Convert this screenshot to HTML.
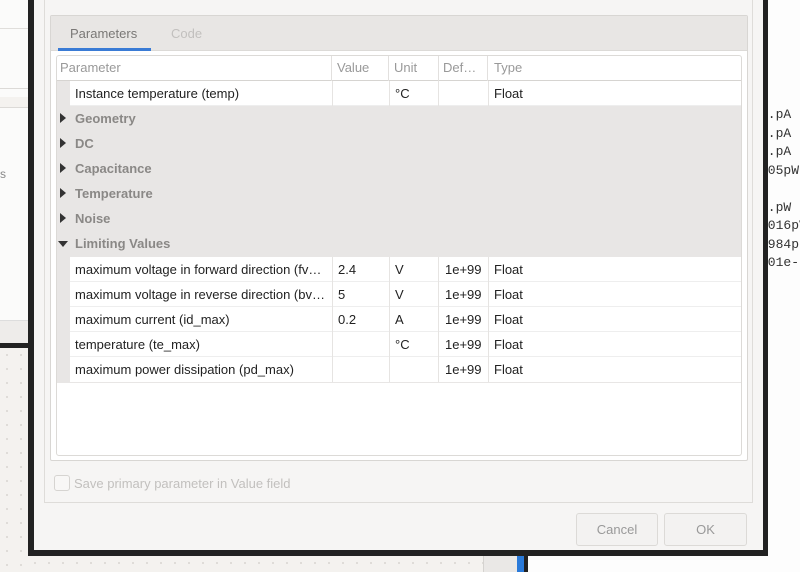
<!DOCTYPE html>
<html><head><meta charset="utf-8"><style>
*{margin:0;padding:0;box-sizing:border-box}
body{width:800px;height:572px;overflow:hidden;background:#f4f2ef;font-family:"Liberation Sans",sans-serif;font-size:13px;color:#222;position:relative}
.abs{position:absolute}
.dots{background-image:radial-gradient(#d8d5d0 1px,transparent 1px);background-size:14px 14px}
.mono{font-family:"Liberation Mono",monospace;font-size:13px;color:#333;line-height:18.5px}
.row{position:absolute;left:70px;width:671px;height:25px;line-height:25px;background:#fff;border-bottom:1px solid #eee}
.row span{position:absolute;top:0;white-space:nowrap;overflow:hidden}
.grp{position:absolute;left:75px;height:25px;line-height:25px;color:#8a8886;font-weight:bold;font-size:13px}
.tri{position:absolute;left:60px;width:0;height:0;border-top:5px solid transparent;border-bottom:5px solid transparent;border-left:6px solid #333}
.vl{position:absolute;top:0;width:1px;height:25px;background:#e6e4e2}
</style></head><body>
<div class="abs" style="left:0;top:0;width:28px;height:345px;background:#fbfbfa"></div>
<div class="abs" style="left:0;top:28px;width:28px;height:1px;background:#e0dedb"></div>
<div class="abs" style="left:0;top:88px;width:28px;height:1px;background:#dcdad7"></div>
<div class="abs" style="left:0;top:97px;width:28px;height:10px;background:#f4f2ef"></div>
<div class="abs" style="left:0;top:107px;width:28px;height:1px;background:#dcdad7"></div>
<div class="abs" style="left:0;top:167px;color:#888;font-size:12px">s</div>
<div class="abs" style="left:0;top:320px;width:28px;height:25px;background:#eeecea;border-top:1px solid #ddd"></div>
<div class="abs" style="left:0;top:343px;width:30px;height:5px;background:#222"></div>
<div class="abs dots" style="left:0;top:348px;width:28px;height:224px"></div>
<div class="abs dots" style="left:28px;top:556px;width:455px;height:16px"></div>
<div class="abs" style="left:483px;top:556px;width:34px;height:16px;background:#eae8e6;border-left:1px solid #d5d3d0"></div>
<div class="abs" style="left:517px;top:556px;width:7px;height:16px;background:#2a7ad9"></div>
<div class="abs" style="left:524px;top:556px;width:4px;height:16px;background:#222"></div>
<div class="abs" style="left:528px;top:556px;width:272px;height:16px;background:#fdfdfd"></div>
<div class="abs" style="left:768px;top:0;width:32px;height:572px;background:#fdfdfd"></div>
<div class="abs mono" style="left:760px;top:106px;white-space:pre"> .pA
 .pA
 .pA
 05pW

 .pW
 016pV
 984p
 01e-</div>
<div class="abs" style="left:28px;top:-10px;width:740px;height:566px;background:#222"></div>
<div class="abs" style="left:34px;top:-10px;width:729px;height:560px;background:#f6f5f4"></div>
<div class="abs" style="left:44px;top:-2px;width:709px;height:505px;border:1px solid #dedcd9;border-top:none"></div>
<div class="abs" style="left:50px;top:15px;width:698px;height:446px;border:1px solid #d8d6d3;background:#fff;border-radius:2px"></div>
<div class="abs" style="left:51px;top:16px;width:696px;height:35px;background:#e8e6e4;border-bottom:1px solid #dcdad7"></div>
<div class="abs" style="left:70px;top:26px;color:#7a7876">Parameters</div>
<div class="abs" style="left:171px;top:26px;color:#c2c0be">Code</div>
<div class="abs" style="left:58px;top:48px;width:93px;height:3px;background:#3a7bd5"></div>
<div class="abs" style="left:56px;top:55px;width:686px;height:401px;border:1px solid #dcdad7;border-radius:3px;background:#fff"></div>
<div class="abs" style="left:57px;top:56px;width:684px;height:25px;line-height:24px;color:#999;border-bottom:1px solid #d6d4d1">
<span class="abs" style="left:3px">Parameter</span>
<span class="abs" style="left:274px;top:0;width:1px;height:25px;background:#e2e0de"></span><span class="abs" style="left:280px">Value</span>
<span class="abs" style="left:331px;top:0;width:1px;height:25px;background:#e2e0de"></span><span class="abs" style="left:337px">Unit</span>
<span class="abs" style="left:381px;top:0;width:1px;height:25px;background:#e2e0de"></span><span class="abs" style="left:386px">Def…</span>
<span class="abs" style="left:430px;top:0;width:1px;height:25px;background:#e2e0de"></span><span class="abs" style="left:437px">Type</span>
</div>
<div class="abs" style="left:57px;top:81px;width:684px;height:302px;background:#e8e6e5"></div>
<div class="row" style="top:81px"><span style="left:5px">Instance temperature (temp)</span><i class="vl" style="left:262px"></i><i class="vl" style="left:319px"></i><span style="left:325px">°C</span><i class="vl" style="left:368px"></i><i class="vl" style="left:418px"></i><span style="left:424px">Float</span></div>
<i class="tri" style="top:113px"></i><div class="grp" style="top:106px">Geometry</div>
<i class="tri" style="top:138px"></i><div class="grp" style="top:131px">DC</div>
<i class="tri" style="top:163px"></i><div class="grp" style="top:156px">Capacitance</div>
<i class="tri" style="top:188px"></i><div class="grp" style="top:181px">Temperature</div>
<i class="tri" style="top:213px"></i><div class="grp" style="top:206px">Noise</div>
<i class="abs" style="left:58px;top:241px;width:0;height:0;border-left:5px solid transparent;border-right:5px solid transparent;border-top:6px solid #333"></i><div class="grp" style="top:231px">Limiting Values</div>
<div class="row" style="top:257px"><span style="left:5px;width:255px">maximum voltage in forward direction (fv…</span><i class="vl" style="left:262px"></i><span style="left:268px">2.4</span><i class="vl" style="left:319px"></i><span style="left:325px">V</span><i class="vl" style="left:368px"></i><span style="left:375px">1e+99</span><i class="vl" style="left:418px"></i><span style="left:424px">Float</span></div>
<div class="row" style="top:282px"><span style="left:5px;width:255px">maximum voltage in reverse direction (bv…</span><i class="vl" style="left:262px"></i><span style="left:268px">5</span><i class="vl" style="left:319px"></i><span style="left:325px">V</span><i class="vl" style="left:368px"></i><span style="left:375px">1e+99</span><i class="vl" style="left:418px"></i><span style="left:424px">Float</span></div>
<div class="row" style="top:307px"><span style="left:5px">maximum current (id_max)</span><i class="vl" style="left:262px"></i><span style="left:268px">0.2</span><i class="vl" style="left:319px"></i><span style="left:325px">A</span><i class="vl" style="left:368px"></i><span style="left:375px">1e+99</span><i class="vl" style="left:418px"></i><span style="left:424px">Float</span></div>
<div class="row" style="top:332px"><span style="left:5px">temperature (te_max)</span><i class="vl" style="left:262px"></i><i class="vl" style="left:319px"></i><span style="left:325px">°C</span><i class="vl" style="left:368px"></i><span style="left:375px">1e+99</span><i class="vl" style="left:418px"></i><span style="left:424px">Float</span></div>
<div class="row" style="top:357px;border-bottom:none"><span style="left:5px">maximum power dissipation (pd_max)</span><i class="vl" style="left:262px"></i><i class="vl" style="left:319px"></i><i class="vl" style="left:368px"></i><span style="left:375px">1e+99</span><i class="vl" style="left:418px"></i><span style="left:424px">Float</span></div>
<div class="abs" style="left:54px;top:475px;width:16px;height:16px;border:1px solid #d6d4d1;border-radius:3px;background:#f8f7f6"></div>
<div class="abs" style="left:74px;top:476px;color:#c2c0be">Save primary parameter in Value field</div>
<div class="abs" style="left:576px;top:513px;width:82px;height:33px;border:1px solid #dcdad7;border-radius:3px;background:#f3f2f1;color:#999;text-align:center;line-height:31px">Cancel</div>
<div class="abs" style="left:664px;top:513px;width:83px;height:33px;border:1px solid #dcdad7;border-radius:3px;background:#f3f2f1;color:#999;text-align:center;line-height:31px">OK</div>
</body></html>
